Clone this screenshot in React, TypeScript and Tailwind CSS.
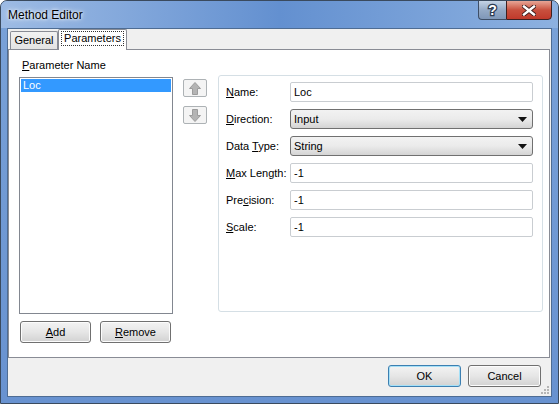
import React from 'react';

const font = { fontFamily: '"Liberation Sans", Arial, sans-serif' };

const UpArrow = () => (
  <svg width="12" height="13" viewBox="0 0 12 13">
    <path d="M6 0.5 L11.5 6.5 L8.5 6.5 L8.5 12.5 L3.5 12.5 L3.5 6.5 L0.5 6.5 Z" fill="#b4b4b4" stroke="#9c9c9c" strokeWidth="1" />
  </svg>
);

const DownArrow = () => (
  <svg width="12" height="13" viewBox="0 0 12 13">
    <path d="M6 12.5 L11.5 6.5 L8.5 6.5 L8.5 0.5 L3.5 0.5 L3.5 6.5 L0.5 6.5 Z" fill="#b4b4b4" stroke="#9c9c9c" strokeWidth="1" />
  </svg>
);

const Caret = () => (
  <svg width="9" height="5" viewBox="0 0 9 5">
    <path d="M0 0 L9 0 L4.5 5 Z" fill="#111" />
  </svg>
);

const TextBox = ({ value }: { value: string }) => (
  <div className="w-[243px] h-[20px] border border-[#c9cdd1] rounded-[2px] bg-white flex items-center pl-[3px] text-[11px] text-black">
    {value}
  </div>
);

const Select = ({ value }: { value: string }) => (
  <div className="w-[243px] h-[20px] border border-[#707070] rounded-[3px] bg-gradient-to-b from-[#f2f2f2] via-[#ebebeb] to-[#d4d4d4] flex items-center justify-between pl-[3px] pr-[5px] text-[11px] text-black">
    <span>{value}</span>
    <Caret />
  </div>
);

const Button = ({ children, def }: { children: React.ReactNode; def?: boolean }) => (
  <div
    className={
      'w-[71px] h-[22px] rounded-[3px] border flex items-center justify-center text-[11px] text-black bg-gradient-to-b from-[#f3f3f3] via-[#e6e6e6] to-[#d2d2d2] ' +
      (def ? 'border-[#3c7fb1] shadow-[inset_0_0_0_1px_#a6e0f7]' : 'border-[#707070] shadow-[inset_0_0_0_1px_#fcfcfc]')
    }
  >
    {children}
  </div>
);

const rows: { label: React.ReactNode; kind: 'text' | 'select'; value: string }[] = [
  { label: <><u>N</u>ame:</>, kind: 'text', value: 'Loc' },
  { label: <><u>D</u>irection:</>, kind: 'select', value: 'Input' },
  { label: <>Data <u>T</u>ype:</>, kind: 'select', value: 'String' },
  { label: <><u>M</u>ax Length:</>, kind: 'text', value: '-1' },
  { label: <>Pre<u>c</u>ision:</>, kind: 'text', value: '-1' },
  { label: <><u>S</u>cale:</>, kind: 'text', value: '-1' },
];

export default function App() {
  return (
    <div style={font} className="w-[559px] h-[404px] bg-white">
      <div className="w-[559px] h-[404px] flex flex-col border border-[#3a4a5e] rounded-t-[7px] bg-gradient-to-b from-[#7aa2d8] to-[#6892d0] overflow-hidden">
        {/* Title bar */}
        <div className="h-[27px] flex items-start justify-between pl-[7px] pr-[6px] bg-gradient-to-r from-[#9dbbe4] via-[#6390d0] to-[#8db1e0]">
          <div className="mt-[7px] text-[12px] text-black leading-[14px] [text-shadow:0_0_6px_#ffffff,0_0_3px_#ffffff]">Method Editor</div>
          <div className="flex -mt-px">
            <div className="w-[28px] h-[20px] rounded-bl-[4px] border border-[#3e4e66] border-r-0 bg-gradient-to-b from-[#c6d4e6] via-[#95aac6] to-[#7f97b8] flex items-center justify-center">
              <span className="text-[14px] leading-[14px] font-bold text-white [-webkit-text-stroke:2.5px_#2c3b52] [paint-order:stroke_fill]">?</span>
            </div>
            <div className="w-[46px] h-[20px] rounded-br-[4px] border border-[#3e2020] bg-gradient-to-b from-[#e6a596] via-[#c8503e] to-[#c0392b] flex items-center justify-center">
              <svg width="14" height="11" viewBox="0 0 14 11">
                <path d="M2 1.5 L12 9.5 M12 1.5 L2 9.5" stroke="#3a1a1a" strokeWidth="4.2" strokeLinecap="square" />
                <path d="M2 1.5 L12 9.5 M12 1.5 L2 9.5" stroke="#ffffff" strokeWidth="2.4" strokeLinecap="square" />
              </svg>
            </div>
          </div>
        </div>

        {/* Frame with client area */}
        <div className="flex-1 px-[6px] pb-[6px]">
          <div className="h-full border border-[#4e6c93] bg-[#f0f0f0] flex flex-col">
            {/* Tab strip */}
            <div className="h-[20px] flex items-end pl-[2px] relative z-10">
              <div className="w-[48px] h-[18px] border border-[#898c95] border-b-0 rounded-t-[2px] bg-gradient-to-b from-[#f2f2f2] to-[#e3e3e3] flex items-center justify-center text-[11px] text-black">
                General
              </div>
              <div className="w-[69px] h-[21px] -mb-px border border-[#898c95] border-b-0 rounded-t-[2px] bg-white flex items-start justify-center pt-[2px]">
                <span className="text-[11px] leading-[13px] text-black outline outline-1 outline-dotted outline-[#333] outline-offset-0 px-[2px]">
                  Parameters
                </span>
              </div>
            </div>

            {/* Tab panel */}
            <div className="h-[309px] mr-px border border-[#898c95] bg-white flex items-start pl-[10px] pt-[8px]">
              <div className="flex flex-col">
                <div className="h-[14px] leading-[14px] ml-[3px] text-[11px] text-black">
                  <u>P</u>arameter Name
                </div>
                <div className="mt-[5px] w-[154px] h-[237px] border border-[#828790] bg-white p-px">
                  <div className="h-[13px] bg-[#3399ff] text-white text-[11px] leading-[13px] pl-[2px]">Loc</div>
                </div>
                <div className="mt-[7px] ml-px flex gap-[9px]">
                  <Button><u>A</u>dd</Button>
                  <Button><u>R</u>emove</Button>
                </div>
              </div>

              <div className="ml-[10px] mt-[21px] flex flex-col gap-[9px]">
                <div className="w-[24px] h-[18px] border border-[#adb2b5] rounded-[2px] bg-[#f4f4f4] flex items-center justify-center">
                  <UpArrow />
                </div>
                <div className="w-[24px] h-[18px] border border-[#adb2b5] rounded-[2px] bg-[#f4f4f4] flex items-center justify-center">
                  <DownArrow />
                </div>
              </div>

              <div className="ml-[11px] mt-[17px] w-[325px] h-[237px] border border-[#d5dfe5] rounded-[3px] pt-[6px] pl-[7px] flex flex-col gap-[7px]">
                {rows.map((r, i) => (
                  <div key={i} className="flex items-center h-[20px]">
                    <div className="w-[64px] text-[11px] text-black">{r.label}</div>
                    {r.kind === 'text' ? <TextBox value={r.value} /> : <Select value={r.value} />}
                  </div>
                ))}
              </div>
            </div>

            {/* Bottom buttons */}
            <div className="flex-1 relative flex justify-end items-start pt-[7px] pr-[10px] gap-[7px]">
              <div className="w-[73px] h-[22px] rounded-[3px] border border-[#3c7fb1] shadow-[inset_0_0_0_1px_#a6e0f7] bg-gradient-to-b from-[#f3f3f3] via-[#e6e6e6] to-[#d2d2d2] flex items-center justify-center text-[11px] text-black">
                OK
              </div>
              <div className="w-[73px] h-[22px] rounded-[3px] border border-[#707070] shadow-[inset_0_0_0_1px_#fcfcfc] bg-gradient-to-b from-[#f3f3f3] via-[#e6e6e6] to-[#d2d2d2] flex items-center justify-center text-[11px] text-black">
                Cancel
              </div>
              <svg className="absolute right-[1px] bottom-[1px]" width="10" height="10" viewBox="0 0 10 10">
                <g fill="#b5b5b5">
                  <rect x="7" y="1" width="2" height="2" />
                  <rect x="4" y="4" width="2" height="2" />
                  <rect x="7" y="4" width="2" height="2" />
                  <rect x="1" y="7" width="2" height="2" />
                  <rect x="4" y="7" width="2" height="2" />
                  <rect x="7" y="7" width="2" height="2" />
                </g>
              </svg>
            </div>
          </div>
        </div>
      </div>
    </div>
  );
}
